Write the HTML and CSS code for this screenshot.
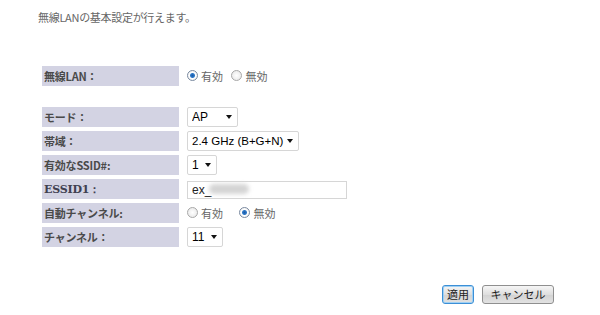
FILE: index.html
```html
<!DOCTYPE html>
<html lang="ja">
<head>
    <meta charset="UTF-8">
    <title>無線LAN基本設定</title>
    <link rel="stylesheet" href="styles.css">
</head>
<body>
    <p class="intro">無線LANの基本設定が行えます。</p>

    <table class="settings">
        <tr>
            <th>無線LAN：</th>
            <td>
                <label class="radio"><input type="radio" name="wlan" checked>有効</label>
                <label class="radio"><input type="radio" name="wlan">無効</label>
            </td>
        </tr>
        <tr class="spacer"><td colspan="2"></td></tr>
        <tr>
            <th>モード：</th>
            <td><span class="select w-mode"><select><option>AP</option></select></span></td>
        </tr>
        <tr>
            <th>帯域：</th>
            <td><span class="select w-band"><select><option>2.4 GHz (B+G+N)</option></select></span></td>
        </tr>
        <tr>
            <th>有効なSSID#:</th>
            <td><span class="select w-num"><select><option>1</option></select></span></td>
        </tr>
        <tr>
            <th class="serif">ESSID1：</th>
            <td><input class="text" type="text" value="ex_"><span class="blur"></span></td>
        </tr>
        <tr>
            <th>自動チャンネル:</th>
            <td>
                <label class="radio wide"><input type="radio" name="auto">有効</label>
                <label class="radio"><input type="radio" name="auto" checked>無効</label>
            </td>
        </tr>
        <tr>
            <th>チャンネル：</th>
            <td><span class="select w-ch"><select><option>11</option></select></span></td>
        </tr>
    </table>

    <div class="actions">
        <button class="btn default">適用</button>
        <button class="btn cancel">キャンセル</button>
    </div>
</body>
</html>
```

FILE: styles.css
```css
body {
    margin: 0;
    font-family: "Noto Sans CJK JP", "Liberation Sans", sans-serif;
    font-size: 11px;
    color: #555;
    background: #fff;
}
.intro {
    margin: 0;
    padding: 9px 0 0 38px;
    color: #666;
    letter-spacing: -0.3px;
}
.settings {
    margin: 37px 0 0 38px;
    border-collapse: separate;
    border-spacing: 4px 4px;
}
.settings th {
    width: 135px;
    height: 20px;
    padding: 0 0 0 2px;
    background: #d3d3e3;
    color: #4a4a4a;
    font-weight: bold;
    text-align: left;
    letter-spacing: -0.2px;
}
.settings th.serif {
    font-family: "DejaVu Serif", serif;
    font-size: 11px;
    color: #404050;
}
.settings td {
    padding: 0 0 0 4px;
    height: 20px;
}
.settings .spacer td {
    height: 13px;
}
.radio {
    display: inline-flex;
    align-items: center;
    gap: 2px;
    margin-right: 6px;
    color: #666;
}
.radio.wide {
    margin-right: 14px;
}
.radio input {
    appearance: none;
    margin: 0 1px 0 0;
    width: 11px;
    height: 11px;
    border-radius: 50%;
    border: 1px solid #a8a8a8;
    background: radial-gradient(circle, #fff 0%, #e4e4e4 100%);
}
.radio input:checked {
    border-color: #7a8aa0;
    background: radial-gradient(circle, #1c5ba8 0, #2f79c8 2px, #fff 3px, #e8e8e8 100%);
}
.select {
    position: relative;
    display: inline-block;
    vertical-align: middle;
}
.select select {
    appearance: none;
    height: 20px;
    padding: 0 0 0 4px;
    border: 1px solid #d6d6d6;
    border-radius: 2px;
    background: #fff;
    font-family: "Liberation Sans", Arial, sans-serif;
    font-size: 12px;
    color: #000;
}
.select::after {
    content: "";
    position: absolute;
    right: 6px;
    top: 8px;
    border-left: 3px solid transparent;
    border-right: 3px solid transparent;
    border-top: 4px solid #111;
}
.w-mode select { width: 51px; }
.w-band select { width: 112px; font-size: 11.5px; }
.w-num select { width: 30px; }
.w-ch select { width: 36px; }
.text {
    width: 150px;
    height: 16px;
    padding: 0 4px;
    border: 1px solid #d6d6d6;
    font-family: "Liberation Sans", Arial, sans-serif;
    font-size: 12px;
    color: #222;
    vertical-align: middle;
}
.blur {
    position: absolute;
    margin: 4px 0 0 -138px;
    width: 40px;
    height: 10px;
    border-radius: 5px;
    background: #d4d4d4;
    filter: blur(2px);
}
.actions {
    display: flex;
    gap: 8px;
    margin: 34px 0 0 442px;
}
.btn {
    height: 19px;
    padding: 0;
    border: 1px solid #8f8f8f;
    border-radius: 3px;
    background: linear-gradient(#f6f6f6, #dedede 50%, #d2d2d2 51%, #e2e2e2);
    font-family: "Noto Sans CJK JP", sans-serif;
    font-size: 11px;
    color: #222;
    line-height: 15px;
}
.btn.default {
    width: 32px;
    border-color: #3c8fd6;
    box-shadow: inset 0 0 0 1px #9fd0f4;
}
.btn.cancel {
    width: 72px;
}
```
